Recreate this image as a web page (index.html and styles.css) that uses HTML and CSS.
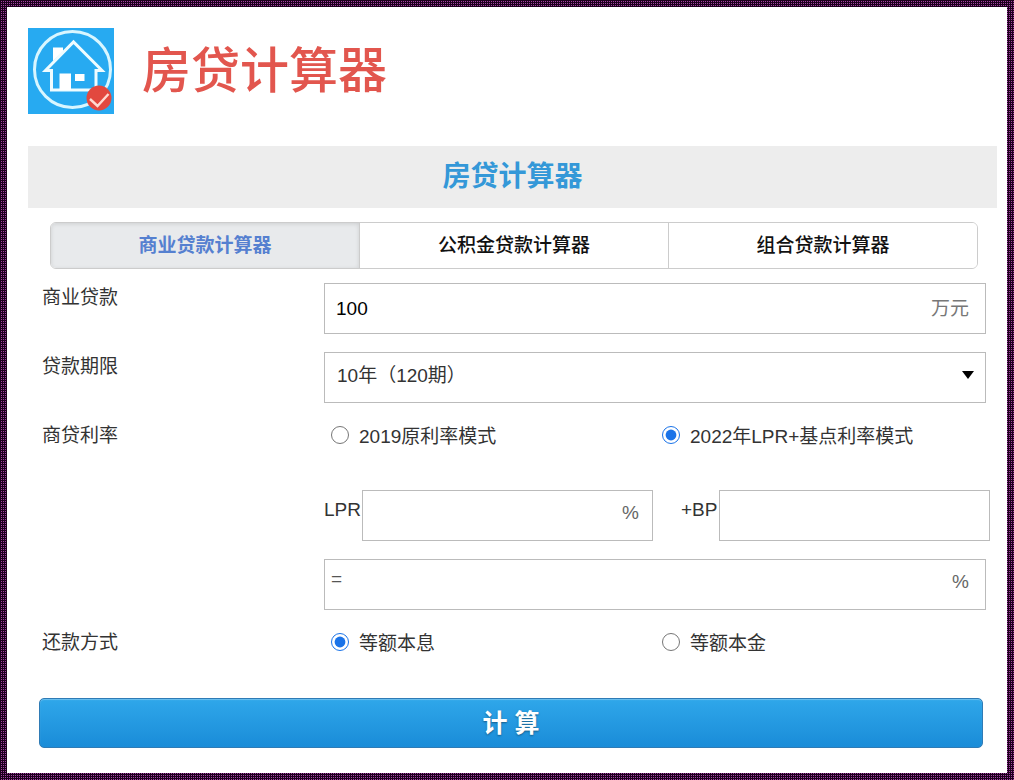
FILE: index.html
```html
<!DOCTYPE html>
<html lang="zh-CN">
<head>
<meta charset="utf-8">
<meta name="viewport" content="width=device-width, initial-scale=1">
<title>房贷计算器</title>
<link rel="stylesheet" href="styles.css">
</head>
<body>
<main class="page">
  <header class="brand">
    <svg class="brand-logo" viewBox="0 0 86 86" aria-hidden="true">
      <rect width="86" height="86" fill="#27aaf1"/>
      <circle cx="44.500" cy="41.500" r="38" fill="none" stroke="#d8f6ff" stroke-width="3"/>
      <path d="M25 19.500H35V24L25 33z" fill="#fff"/>
      <path d="M23.500 42.500V62H68V42.500H74L45.500 14L17.500 42.500H25" fill="none" stroke="#effcff" stroke-width="3"/>
      <path d="M31.500 45.500h11.500V62H31.500zM47 46h9.500v7H47z" fill="#fff"/>
      <circle cx="71" cy="70" r="12.500" fill="#e2483f"/>
      <path d="M62 71L69.500 78L80.500 66" fill="none" stroke="#ffd9d0" stroke-width="2.400"/>
    </svg>
    <p class="brand-name">房贷计算器</p>
  </header>

  <h1 class="title-bar">房贷计算器</h1>

  <nav class="tabs">
    <button type="button" class="tab tab-active" aria-pressed="true">商业贷款计算器</button>
    <button type="button" class="tab" aria-pressed="false">公积金贷款计算器</button>
    <button type="button" class="tab" aria-pressed="false">组合贷款计算器</button>
  </nav>

  <form class="form">
    <div class="row">
      <label class="label" for="amount">商业贷款</label>
      <div class="field">
        <input class="input input-amount" id="amount" type="text" value="100">
        <span class="unit">万元</span>
      </div>
    </div>

    <div class="row">
      <label class="label" for="term">贷款期限</label>
      <div class="field">
        <select class="select" id="term">
          <option>10年（120期）</option>
        </select>
        <svg class="arrow" viewBox="0 0 12 8" aria-hidden="true"><path d="M0 0H12L6 8z"/></svg>
      </div>
    </div>

    <div class="row" role="radiogroup" aria-labelledby="rate-label">
      <span class="label" id="rate-label">商贷利率</span>
      <div class="choices">
        <label class="choice"><input class="radio" type="radio" name="rate"><span>2019原利率模式</span></label>
        <label class="choice"><input class="radio" type="radio" name="rate" checked><span>2022年LPR+基点利率模式</span></label>
      </div>
    </div>

    <div class="row">
      <div class="pair">
        <div class="pair-item">
          <label class="pair-label" for="lpr">LPR</label>
          <div class="field">
            <input class="input" id="lpr" type="text">
            <span class="unit unit-percent">%</span>
          </div>
        </div>
        <div class="pair-item">
          <label class="pair-label" for="bp">+BP</label>
          <div class="field">
            <input class="input" id="bp" type="text">
          </div>
        </div>
      </div>
    </div>

    <div class="row">
      <div class="field">
        <label class="equals" for="result">=</label>
        <input class="input" id="result" type="text">
        <span class="unit unit-percent">%</span>
      </div>
    </div>

    <div class="row" role="radiogroup" aria-labelledby="repay-label">
      <span class="label" id="repay-label">还款方式</span>
      <div class="choices">
        <label class="choice"><input class="radio" type="radio" name="repay" checked><span>等额本息</span></label>
        <label class="choice"><input class="radio" type="radio" name="repay"><span>等额本金</span></label>
      </div>
    </div>

    <button type="button" class="submit">计 算</button>
  </form>
</main>
</body>
</html>
```
FILE: styles.css
```css
* {
  box-sizing: border-box;
}

body {
  margin: 0;
  padding: 7px;
  min-height: 100vh;
  display: flex;
  background-color: #a040a0;
  background-image:
    linear-gradient(90deg, #1c001c 1px, transparent 1px),
    linear-gradient(#1c001c 1px, transparent 1px);
  background-size: 2px 2px;
  color: #333;
  font: 19px/28px "Liberation Sans", "Noto Sans CJK SC", sans-serif;
}

button,
input,
select {
  font: inherit;
}

.page {
  flex: 1;
  padding: 21px 10px 24px 21px;
  background: #fff;
}

.brand {
  display: flex;
  align-items: center;
  gap: 28px;
}

.brand-logo {
  width: 86px;
  height: 86px;
}

.brand-name {
  margin: 0;
  color: #e2564e;
  font-size: 49px;
  font-weight: 500;
  line-height: 86px;
}

.title-bar {
  margin: 32px 0 14px;
  background: #ededed;
  color: #3498d8;
  font-size: 28px;
  font-weight: 700;
  line-height: 62px;
  text-align: center;
}

.tabs {
  display: flex;
  margin: 0 19px 14px 22px;
  border: 1px solid #ccc;
  border-radius: 6px;
  overflow: hidden;
}

.tab {
  flex: 1;
  height: 45px;
  padding: 0;
  border: 0;
  border-left: 1px solid #ccc;
  background: #fff;
  color: #111;
  font-weight: 500;
}

.tab-active {
  border-left: 0;
  background: #e8eaec;
  box-shadow: inset 0 1px 4px rgba(0, 0, 0, 0.12);
  color: #5580d0;
  font-weight: 700;
}

.form {
  display: grid;
  gap: 18px;
  padding: 0 11px 0 14px;
}

.row {
  display: grid;
  grid-template-columns: minmax(0, 282fr) minmax(0, 662fr);
  min-height: 51px;
}

.row > .field,
.row > .choices,
.row > .pair {
  grid-column: 2;
}

.label {
  padding-top: 1px;
}

.field {
  position: relative;
  display: flex;
  align-items: center;
  min-width: 0;
  height: 51px;
  border: 1px solid #bbb;
  background: #fff;
}

.input,
.select {
  flex: 1;
  min-width: 0;
  height: 100%;
  padding: 0 11px;
  border: 0;
  border-radius: 0;
  outline: 0;
  background: transparent;
  color: #333;
}

.input-amount {
  color: #000;
}

.select {
  appearance: none;
  padding: 0 30px 4px 12px;
}

.arrow {
  position: absolute;
  right: 11px;
  top: 18px;
  width: 12px;
  height: 8px;
}

.unit {
  padding-right: 16px;
  color: #777;
}

.unit-percent {
  padding-bottom: 6px;
  color: #666;
}

.pair .unit {
  padding-right: 13px;
}

.equals {
  align-self: flex-start;
  padding: 5px 0 0 6px;
  color: #555;
}

.choices {
  display: grid;
  grid-template-columns: 1fr 1fr;
  align-items: start;
}

.choice {
  display: flex;
  align-items: flex-start;
  gap: 10px;
  padding: 2px 0 0 7px;
}

.radio {
  width: 18px;
  height: 18px;
  margin: 3px 0 0;
  accent-color: #1a73e8;
}

.pair {
  display: grid;
  grid-template-columns: minmax(0, 329fr) minmax(0, 309fr);
  gap: 28px;
  margin-right: -4px;
}

.pair-item {
  display: flex;
}

.pair-label {
  width: 38px;
  padding-top: 6px;
}

.pair-item .field {
  flex: 1;
}

.submit {
  height: 50px;
  margin: 1px 3px 0 -3px;
  padding: 0;
  border: 1px solid #2f7bb5;
  border-radius: 5px;
  background: linear-gradient(#2fa7ea, #1a8cd8);
  box-shadow: inset 0 1px 1px rgba(255, 255, 255, 0.3);
  color: #fff;
  font-size: 25px;
  font-weight: 700;
  text-shadow: 0 1px 2px rgba(0, 0, 0, 0.4);
}
```
